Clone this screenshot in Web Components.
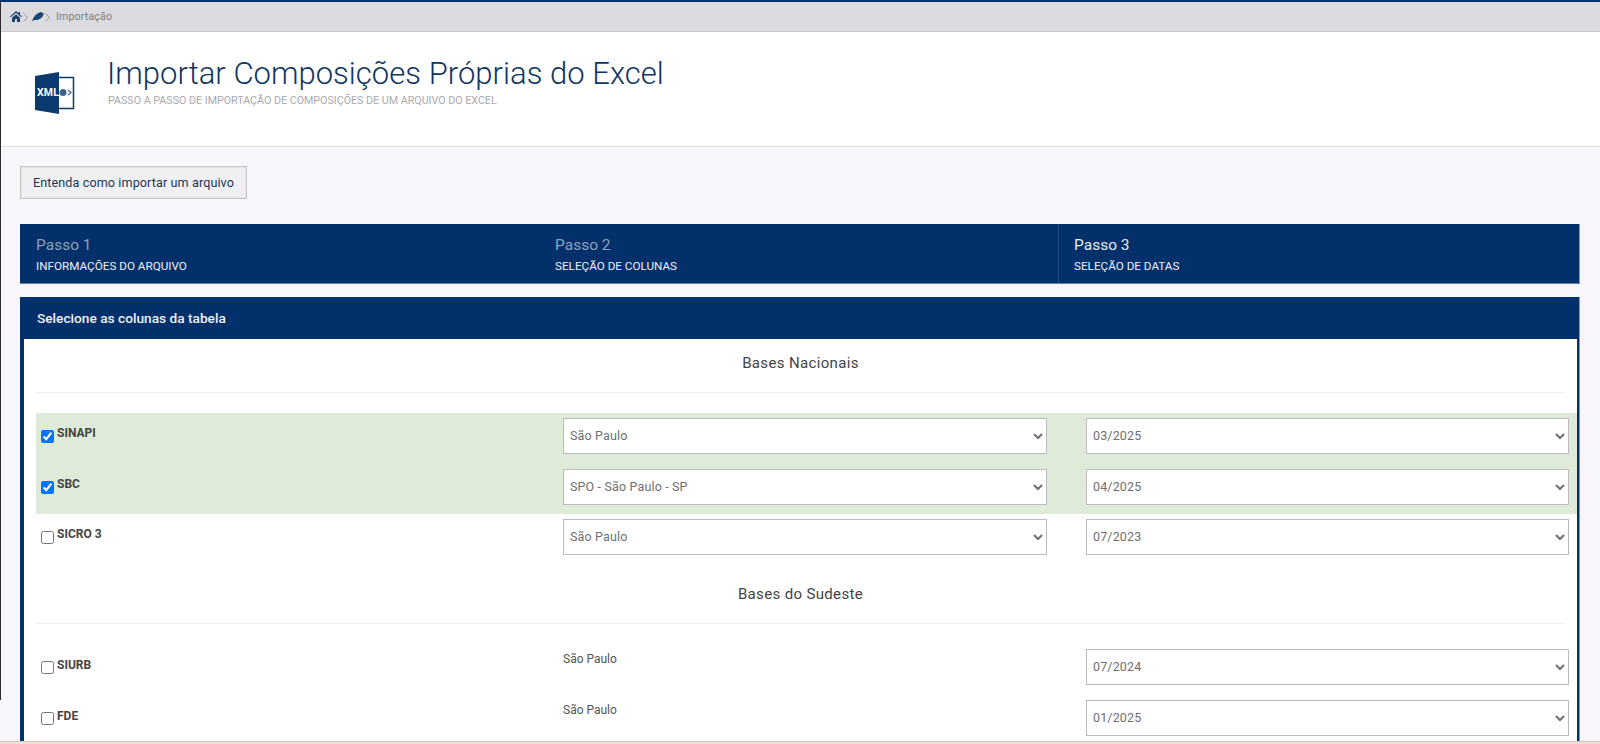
<!DOCTYPE html>
<html lang="pt-BR">
<head>
<meta charset="utf-8">
<title>Importação</title>
<style>
  html, body { margin: 0; height: 100%; overflow: hidden; }
  body { font-family: Roboto, "Liberation Sans", sans-serif; background: #f8f6fa; }
  app-page { height: 744px; }
</style>
</head>
<body>
<app-page>
  <app-breadcrumb slot="top">Importação</app-breadcrumb>
  <page-header slot="top" heading="Importar Composições Próprias do Excel" sub="Passo a passo de importação de composições de um arquivo do Excel"></page-header>
  <help-button>Entenda como importar um arquivo</help-button>
  <step-bar>
    <step-item label="Passo 1" desc="Informações do arquivo"></step-item>
    <step-item label="Passo 2" desc="Seleção de colunas"></step-item>
    <step-item label="Passo 3" desc="Seleção de datas" active></step-item>
  </step-bar>
  <base-panel heading="Selecione as colunas da tabela">
    <base-section heading="Bases Nacionais">
      <base-row name="SINAPI" region="São Paulo" date="03/2025" checked></base-row>
      <base-row name="SBC" region="SPO - São Paulo - SP" date="04/2025" checked></base-row>
      <base-row name="SICRO 3" region="São Paulo" date="07/2023"></base-row>
    </base-section>
    <base-section heading="Bases do Sudeste">
      <base-row name="SIURB" region="São Paulo" date="07/2024" fixed></base-row>
      <base-row name="FDE" region="São Paulo" date="01/2025" fixed></base-row>
    </base-section>
  </base-panel>
</app-page>

<script>
// Page frame
class AppPage extends HTMLElement {
  constructor() {
    super();
    this.attachShadow({ mode: "open" });
  }
  connectedCallback() {
    this.shadowRoot.innerHTML = `
      <style>
        :host { display: flex; flex-direction: column; position: relative; overflow: hidden; border-top: 2px solid #03306a; box-sizing: border-box; }
        .content { flex: 1; min-height: 0; overflow: hidden; padding: 19px 20px 0; display: flex; flex-direction: column; align-items: stretch; }
        .strip { height: 3px; flex: none; background: #f3dcd2; border-top: 1px solid #d8c4bc; box-sizing: border-box; }
        .edge { position: absolute; left: 0; top: 0; width: 1px; height: 698px; background: #2a2a30; }
      </style>
      <slot name="top"></slot>
      <div class="content"><slot></slot></div>
      <div class="strip"></div>
      <div class="edge"></div>
    `;
  }
}

class AppBreadcrumb extends HTMLElement {
  constructor() {
    super();
    this.attachShadow({ mode: "open" });
  }
  connectedCallback() {
    this.shadowRoot.innerHTML = `
      <style>
        :host { display: flex; align-items: center; height: 30px; box-sizing: border-box; background: #dcdbdf; border-bottom: 1px solid #c9c9cc; padding-left: 10px; color: #7b7b80; font-size: 10.500px; letter-spacing: .2px; }
        svg { display: block; flex: none; }
        .chev { margin: 2px 3px 0 1px; }
        .pen { margin-left: 1px; }
        span { margin-left: 3px; }
      </style>
      <svg width="12" height="11" viewBox="0 0 12 11"><path fill="#1c4470" d="M6 0 0 5.400l.8.9L6 1.800l5.200 4.500.8-.9-2-1.700V1H8.600v1.300zM2 6.700V11h3V8h2v3h3V6.700L6 3.200z"/></svg>
      <svg class="chev" width="5" height="9" viewBox="0 0 5 9"><path fill="none" stroke="#9a9aa0" d="M.5.500l4 4-4 4"/></svg>
      <svg class="pen" width="12" height="10" viewBox="0 0 12 10"><path fill="#1c4470" d="M0 9.500C.8 7 2 3.500 5.500 1.500L8.500 0 12 1.500 10.500 4.500C8.500 7.500 4.500 8.500 2 8z"/></svg>
      <svg class="chev" width="5" height="9" viewBox="0 0 5 9"><path fill="none" stroke="#9a9aa0" d="M.5.500l4 4-4 4"/></svg>
      <span><slot></slot></span>
    `;
  }
}

class PageHeader extends HTMLElement {
  constructor() {
    super();
    this.attachShadow({ mode: "open" });
  }
  connectedCallback() {
    this.shadowRoot.innerHTML = `
      <style>
        :host { display: flex; height: 115px; box-sizing: border-box; background: #fff; border-bottom: 1px solid #e0dfe3; padding: 23px 0 0 35px; }
        svg { flex: none; margin: 17px 32px 0 0; display: block; }
        h1 { margin: 0; font-size: 31px; line-height: 38px; font-weight: 300; color: #0f3563; letter-spacing: .03px; }
        p { margin: 2px 0 0 1px; font-size: 10.700px; line-height: 12px; color: #a9a9ad; text-transform: uppercase; }
      </style>
      <svg width="40" height="42" viewBox="0 0 40 42">
        <path fill="none" stroke="#0b3a6e" stroke-width="1.500" d="M24 5.500h14.500v31H24"/>
        <path fill="#0b3a6e" d="M0 4 24 0v42L0 38z"/>
        <text x="2" y="24" font-family="Roboto, sans-serif" font-size="10.500" font-weight="700" letter-spacing=".2" fill="#fff">XML</text>
        <circle cx="28" cy="20.500" r="3.500" fill="#3f628d"/>
        <path fill="none" stroke="#3f628d" stroke-width="1.200" d="M33 18l3 2.500-3 2.500"/>
      </svg>
      <div>
        <h1>${this.getAttribute("heading")}</h1>
        <p>${this.getAttribute("sub")}</p>
      </div>
    `;
  }
}

class HelpButton extends HTMLElement {
  constructor() {
    super();
    this.attachShadow({ mode: "open" });
  }
  connectedCallback() {
    this.shadowRoot.innerHTML = `
      <style>
        :host { display: block; align-self: flex-start; margin-bottom: 25px; }
        button { display: block; width: 227px; height: 33px; padding: 0; background: #f0f0f2; border: 1px solid #c6c6c9; box-shadow: inset 0 0 0 1px #e4e4e6; color: #1c3557; font: 400 12.600px Roboto, sans-serif; letter-spacing: .1px; }
      </style>
      <button type="button"><slot></slot></button>
    `;
  }
}

class StepBar extends HTMLElement {
  constructor() {
    super();
    this.attachShadow({ mode: "open" });
  }
  connectedCallback() {
    this.shadowRoot.innerHTML = `
      <style>
        :host { display: grid; grid-template-columns: 519px 519px 1fr; height: 60px; flex: none; background: #03306a; border-bottom: 1px solid #5d7ea8; border-right: 1px solid #7f98ba; box-sizing: border-box; margin-bottom: 13px; }
      </style>
      <slot></slot>
    `;
  }
}

class StepItem extends HTMLElement {
  constructor() {
    super();
    this.attachShadow({ mode: "open" });
  }
  connectedCallback() {
    const active = this.hasAttribute("active");
    this.shadowRoot.innerHTML = `
      <style>
        :host { display: block; box-sizing: border-box; padding: 11px 0 0 16px; ${active ? "border-left: 1px solid #244d80; padding-left: 15px;" : ""} }
        .label { font-size: 15.500px; line-height: 20px; color: ${active ? "#e8ecf2" : "#8ea2bd"}; }
        .desc { margin-top: 4px; font-size: 11.700px; line-height: 14px; font-weight: 400; color: #eef1f5; text-transform: uppercase; }
      </style>
      <div class="label">${this.getAttribute("label")}</div>
      <div class="desc">${this.getAttribute("desc")}</div>
    `;
  }
}

class BasePanel extends HTMLElement {
  constructor() {
    super();
    this.attachShadow({ mode: "open" });
  }
  connectedCallback() {
    this.shadowRoot.innerHTML = `
      <style>
        :host { display: block; flex: 1; min-height: 0; background: #03306a; padding: 0 2px 0 4px; border-right: 1px solid #7f98ba; }
        h2 { margin: 0; height: 42px; padding-left: 13px; font-size: 13.700px; font-weight: 500; line-height: 42px; color: #eef1f5; }
        .body { background: #fff; padding-left: 12px; height: 100%; }
      </style>
      <h2>${this.getAttribute("heading")}</h2>
      <div class="body"><slot></slot></div>
    `;
  }
}

class BaseSection extends HTMLElement {
  constructor() {
    super();
    this.attachShadow({ mode: "open" });
  }
  connectedCallback() {
    this.shadowRoot.innerHTML = `
      <style>
        :host { display: block; padding-bottom: 5.500px; }
        h3 { margin: 0 12px 20px 0; height: 54px; box-sizing: border-box; border-bottom: 1px solid #efeff1; padding-top: 15px; text-align: center; font-size: 15px; font-weight: 400; line-height: 18px; color: #444; letter-spacing: .35px; }
      </style>
      <h3>${this.getAttribute("heading")}</h3>
      <slot></slot>
    `;
  }
}

// One line of the table: checkbox + name, region, reference date
class BaseRow extends HTMLElement {
  constructor() {
    super();
    this.attachShadow({ mode: "open" });
  }
  connectedCallback() {
    const checked = this.hasAttribute("checked");
    const fixed = this.hasAttribute("fixed");
    const region = this.getAttribute("region");
    const date = this.getAttribute("date");
    const regionCell = fixed
      ? `<div class="plain">${region}</div>`
      : `<select><option>${region}</option></select>`;
    this.shadowRoot.innerHTML = `
      <style>
        :host { display: grid; grid-template-columns: 488px 484px 483px; column-gap: 39px; height: 50.500px; box-sizing: border-box; padding: 5px 8px 0 0; ${checked ? "background: #dfebd9;" : ""} }
        .name { display: flex; align-items: flex-start; padding-left: 5px; }
        input { width: 13px; height: 13px; margin: 12px 3px 0 0; flex: none; }
        label { padding-top: ${fixed ? 9 : 8}px; font-size: 12px; line-height: 14px; font-weight: 700; color: #444; }
        select { width: 100%; height: 36px; box-sizing: border-box; padding: 0 0 1px 2px; background-color: #fff; border: 1px solid #bdbbc0; border-radius: 0; color: #6f6f72; font: 400 12.500px Roboto, sans-serif; letter-spacing: .15px; }
        .plain { padding-top: 3px; font-size: 12px; line-height: 14px; color: #555; }
      </style>
      <div class="name">
        <input type="checkbox" id="c" ${checked ? "checked" : ""}>
        <label for="c">${this.getAttribute("name")}</label>
      </div>
      ${regionCell}
      <select><option>${date}</option></select>
    `;
  }
}

customElements.define("app-page", AppPage);
customElements.define("app-breadcrumb", AppBreadcrumb);
customElements.define("page-header", PageHeader);
customElements.define("help-button", HelpButton);
customElements.define("step-bar", StepBar);
customElements.define("step-item", StepItem);
customElements.define("base-panel", BasePanel);
customElements.define("base-section", BaseSection);
customElements.define("base-row", BaseRow);
</script>
</body>
</html>
